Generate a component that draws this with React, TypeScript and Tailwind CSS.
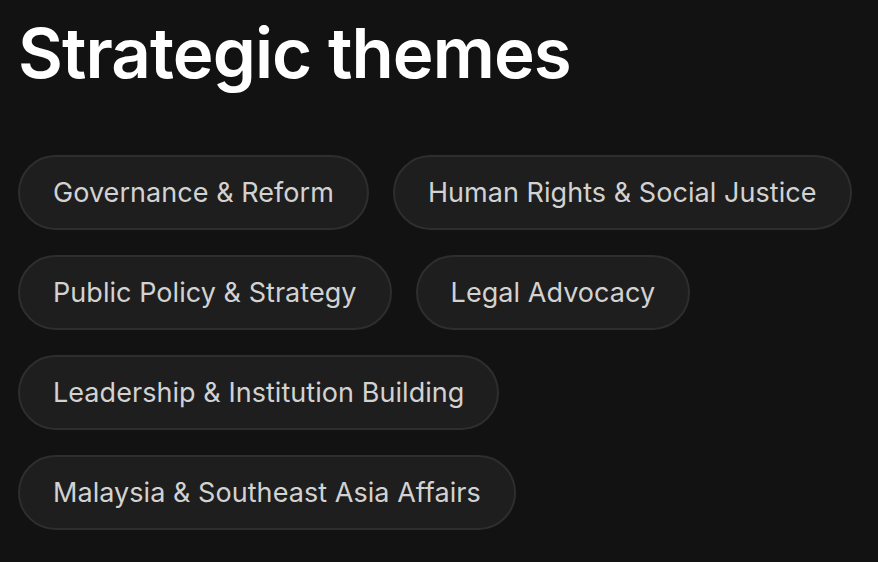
import React from "react";

const themes = [
  "Governance & Reform",
  "Human Rights & Social Justice",
  "Public Policy & Strategy",
  "Legal Advocacy",
  "Leadership & Institution Building",
  "Malaysia & Southeast Asia Affairs",
];

export default function App() {
  return (
    <div
      className="min-h-[562px] w-[878px] bg-[#121212] pl-[18px] pt-[8px]"
      style={{ fontFamily: "Inter, 'Noto Sans', sans-serif" }}
    >
      <h1 className="text-[69px] font-semibold leading-[90px] tracking-[-0.9px] text-white">
        Strategic themes
      </h1>
      <div className="mt-[57px] flex w-[850px] flex-wrap gap-x-[24px] gap-y-[25px]">
        {themes.map((t) => (
          <span
            key={t}
            className="flex h-[75px] items-center rounded-full border-2 border-[#2e2e2e] bg-[#1e1e1e] px-[33px] pt-[2px] text-[27px] tracking-[0.05px] text-[#d2d2d2]"
          >
            {t}
          </span>
        ))}
      </div>
    </div>
  );
}
